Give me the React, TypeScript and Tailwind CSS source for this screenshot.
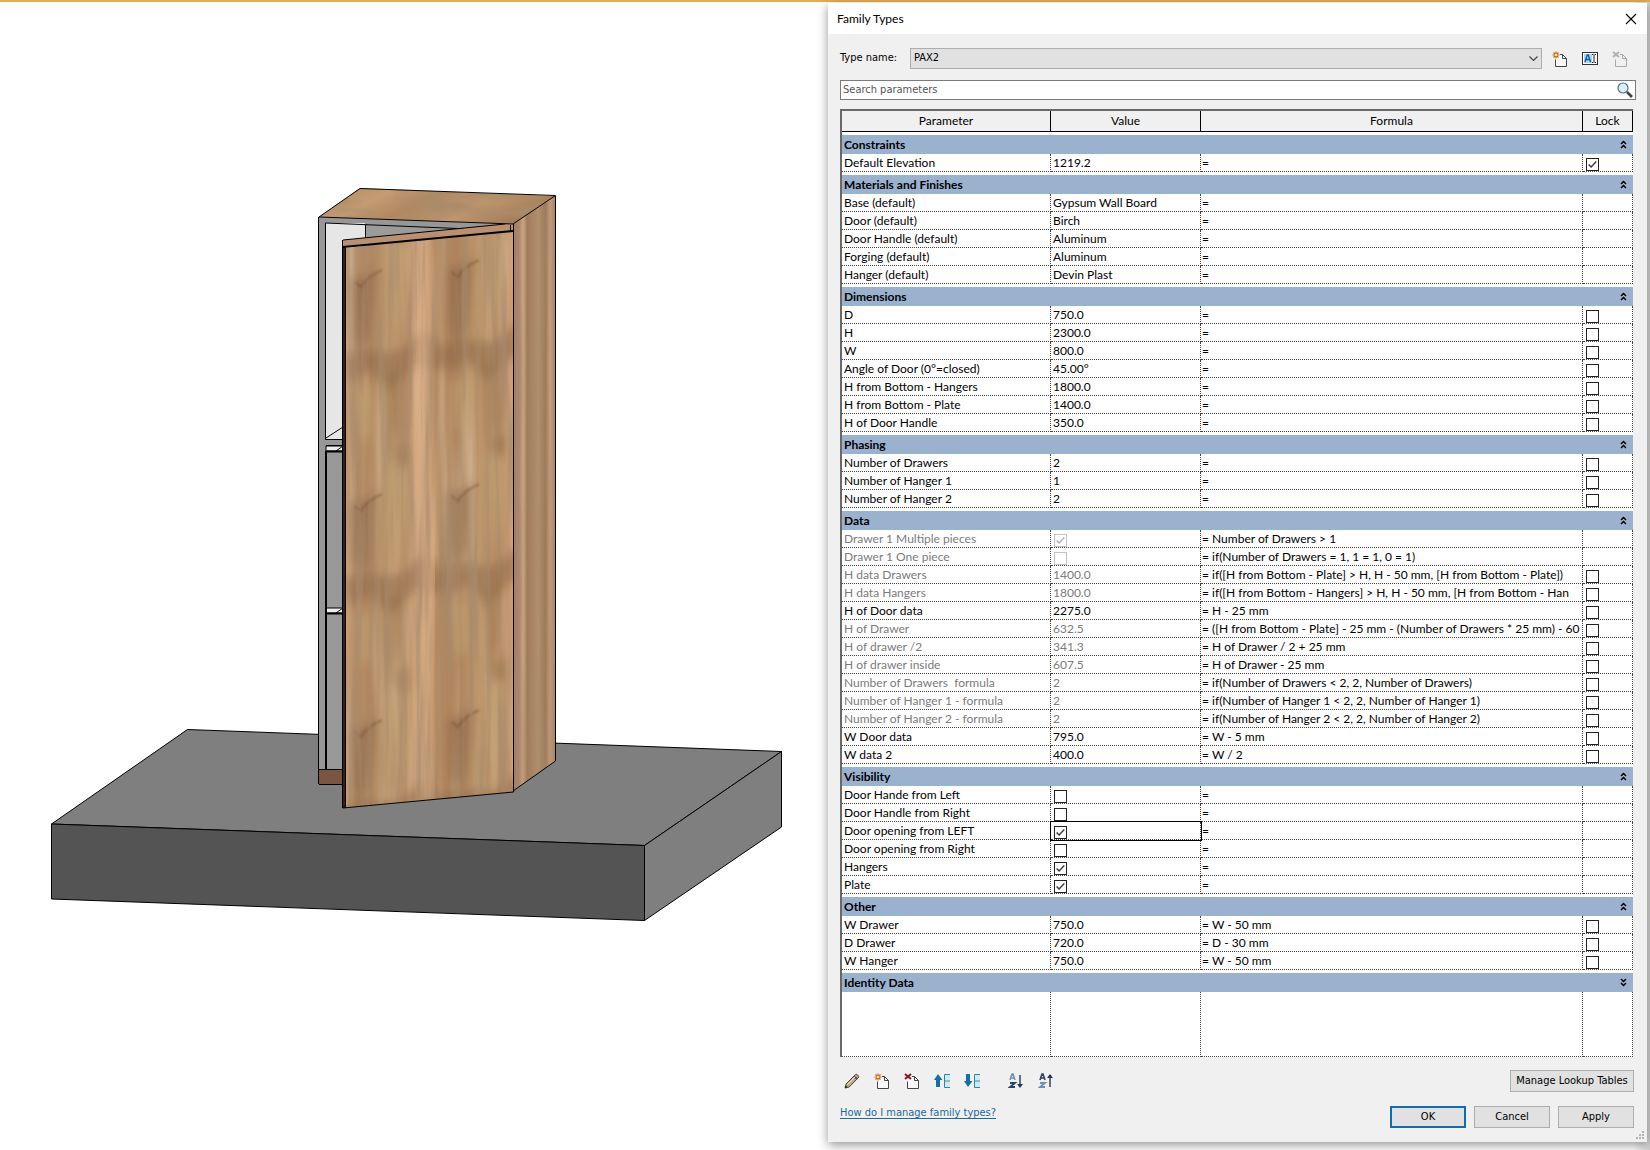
import { useState } from 'react';
import type { ReactNode } from 'react';

type Row = {
  name: string;
  value?: string;
  check?: boolean; // yes/no parameter
  formula?: string;
  lock?: boolean; // undefined = cannot be locked
  dim?: boolean; // driven by a formula
};

type Group = { title: string; open: boolean; rows: Row[] };

const GROUPS: Group[] = [
  {
    title: 'Constraints',
    open: true,
    rows: [{ name: 'Default Elevation', value: '1219.2', lock: true }],
  },
  {
    title: 'Materials and Finishes',
    open: true,
    rows: [
      { name: 'Base (default)', value: 'Gypsum Wall Board' },
      { name: 'Door (default)', value: 'Birch' },
      { name: 'Door Handle (default)', value: 'Aluminum' },
      { name: 'Forging (default)', value: 'Aluminum' },
      { name: 'Hanger (default)', value: 'Devin Plast' },
    ],
  },
  {
    title: 'Dimensions',
    open: true,
    rows: [
      { name: 'D', value: '750.0', lock: false },
      { name: 'H', value: '2300.0', lock: false },
      { name: 'W', value: '800.0', lock: false },
      { name: 'Angle of Door (0°=closed)', value: '45.00°', lock: false },
      { name: 'H from Bottom - Hangers', value: '1800.0', lock: false },
      { name: 'H from Bottom - Plate', value: '1400.0', lock: false },
      { name: 'H of Door Handle', value: '350.0', lock: false },
    ],
  },
  {
    title: 'Phasing',
    open: true,
    rows: [
      { name: 'Number of Drawers', value: '2', lock: false },
      { name: 'Number of Hanger 1', value: '1', lock: false },
      { name: 'Number of Hanger 2', value: '2', lock: false },
    ],
  },
  {
    title: 'Data',
    open: true,
    rows: [
      { name: 'Drawer 1 Multiple pieces', check: true, formula: 'Number of Drawers > 1', dim: true },
      { name: 'Drawer 1 One piece', check: false, formula: 'if(Number of Drawers = 1, 1 = 1, 0 = 1)', dim: true },
      { name: 'H data Drawers', value: '1400.0', formula: 'if([H from Bottom - Plate] > H, H - 50 mm, [H from Bottom - Plate])', lock: false, dim: true },
      { name: 'H data Hangers', value: '1800.0', formula: 'if([H from Bottom - Hangers] > H, H - 50 mm, [H from Bottom - Han', lock: false, dim: true },
      { name: 'H of Door data', value: '2275.0', formula: 'H - 25 mm', lock: false },
      { name: 'H of Drawer', value: '632.5', formula: '([H from Bottom - Plate] - 25 mm - (Number of Drawers * 25 mm) - 60', lock: false, dim: true },
      { name: 'H of drawer /2', value: '341.3', formula: 'H of Drawer / 2 + 25 mm', lock: false, dim: true },
      { name: 'H of drawer inside', value: '607.5', formula: 'H of Drawer - 25 mm', lock: false, dim: true },
      { name: 'Number of Drawers  formula', value: '2', formula: 'if(Number of Drawers < 2, 2, Number of Drawers)', lock: false, dim: true },
      { name: 'Number of Hanger 1 - formula', value: '2', formula: 'if(Number of Hanger 1 < 2, 2, Number of Hanger 1)', lock: false, dim: true },
      { name: 'Number of Hanger 2 - formula', value: '2', formula: 'if(Number of Hanger 2 < 2, 2, Number of Hanger 2)', lock: false, dim: true },
      { name: 'W Door data', value: '795.0', formula: 'W - 5 mm', lock: false },
      { name: 'W data 2', value: '400.0', formula: 'W / 2', lock: false },
    ],
  },
  {
    title: 'Visibility',
    open: true,
    rows: [
      { name: 'Door Hande from Left', check: false },
      { name: 'Door Handle from Right', check: false },
      { name: 'Door opening from LEFT', check: true },
      { name: 'Door opening from Right', check: false },
      { name: 'Hangers', check: true },
      { name: 'Plate', check: true },
    ],
  },
  {
    title: 'Other',
    open: true,
    rows: [
      { name: 'W Drawer', value: '750.0', formula: 'W - 50 mm', lock: false },
      { name: 'D Drawer', value: '720.0', formula: 'D - 30 mm', lock: false },
      { name: 'W Hanger', value: '750.0', formula: 'W - 50 mm', lock: false },
    ],
  },
  { title: 'Identity Data', open: false, rows: [] },
];

const Tick = ({ label, checked, disabled }: { label: string; checked: boolean; disabled?: boolean }) => {
  const [on, setOn] = useState(checked);
  return (
    <span className="grid size-[13px]">
      <input
        type="checkbox"
        aria-label={label}
        checked={on}
        disabled={disabled}
        onChange={() => setOn(!on)}
        className="col-start-1 row-start-1 size-[13px] appearance-none border border-[#222] bg-white disabled:border-[#c4c4c4]"
      />
      {on && (
        <svg viewBox="0 0 13 13" className={`pointer-events-none col-start-1 row-start-1 size-[13px] ${disabled ? 'text-[#b0b0b0]' : 'text-[#3a3a3a]'}`}>
          <path d="M2.6 6.4 5.1 9 10.3 3.6" fill="none" stroke="currentColor" strokeWidth="1.4" />
        </svg>
      )}
    </span>
  );
};

/* ---------- icons ---------- */

const Svg = ({ children }: { children: ReactNode }) => (
  <svg viewBox="0 0 16 16" className="size-4" fill="none">
    {children}
  </svg>
);

const Sheet = ({ color = '#444', fill = '#fafafa' }) => (
  <>
    <path d="M3.5 8v7.5h11v-8l-3-4h-3" fill={fill} />
    <path d="M3.500 8.500v7h11v-8h-4v-4l4 4M8 3.500h2.500" stroke={color} />
  </>
);

const NewIcon = () => (
  <Svg>
    <Sheet />
    <path d="M4 .5v7M.5 4h7M1.5 1.5l5 5M6.5 1.5l-5 5" stroke="#c06a10" strokeWidth="1.2" />
    <circle cx="4" cy="4" r="1.3" fill="#ffe08a" />
  </Svg>
);

const DeleteIcon = ({ off = false }) => (
  <Svg>
    <Sheet color={off ? '#a9a9a9' : '#444'} fill={off ? '#f0f0f0' : '#fafafa'} />
    <path d="m1 1 6 5M7 1 1 6" stroke={off ? '#b0b0b0' : '#8b1a1a'} strokeWidth="2" />
  </Svg>
);

const RenameIcon = () => (
  <Svg>
    <rect x=".5" y="1.5" width="15" height="12" fill="#fff" stroke="#333" />
    <rect x="2" y="3" width="8" height="9" fill="#a8d4f5" />
    <path d="m3 11 2.3-7h1l2.3 7M4 8.5h3.5" stroke="#0f5f9c" strokeWidth="1.4" />
    <path d="M10 3.5h1.5m1 0H14M12 4v7M10 11.5h1.5m1 0H14" stroke="#222" />
  </Svg>
);

const PencilIcon = () => (
  <Svg>
    <path d="m1 15 1.2-4.2 9.3-9.3c1-1 4 1.5 3 3L5.2 14 1 15Z" fill="#c3ab86" stroke="#444" />
    <path d="m10 3 3.3 3.2" stroke="#555" strokeWidth="2" />
    <path d="m3.5 11.5 8-8" stroke="#efe2c8" />
    <path d="m1 15 .8-2.6L3.5 14 1 15Z" fill="#222" />
  </Svg>
);

const MoveIcon = ({ down = false }) => (
  <Svg>
    <path d={down ? 'M2 1h4v7h2.5L4 14 0 8h2Z' : 'M2 14h4V7h2.5L4 1 0 7h2Z'} fill="#1570a6" />
    <path d="M11 2h5v5h-5zM11 9h5v5h-5z" fill="#cdeaf5" />
    <path d="M16 1.5h-5.5v13H16M10.5 8H16" stroke="#2a86a8" />
  </Svg>
);

const SortIcon = ({ up = false }) => (
  <Svg>
    <path d="m2 7 2-6h1l2 6M3 5h3" stroke={up ? '#2e4262' : '#6f90b4'} strokeWidth="1.6" />
    <path d="M2 10h5l-5 4h5" stroke={up ? '#6f90b4' : '#2e4262'} strokeWidth="1.8" />
    <path d="M12 2v12" stroke="#24395a" strokeWidth="1.4" />
    <path d={up ? 'm12 1-3 4h6Z' : 'm12 15-3-4h6Z'} fill="#24395a" />
  </Svg>
);

const LensIcon = () => (
  <Svg>
    <circle cx="6" cy="6" r="5" fill="#dceef8" stroke="#5b7280" strokeWidth="1.2" />
    <path d="m10 10 5 5" stroke="#444" strokeWidth="2.6" />
  </Svg>
);

const Chevrons = ({ down }: { down: boolean }) => (
  <svg viewBox="0 0 7 9" className="h-[9px] w-[7px]" fill="none" stroke="#000" strokeWidth="1.5">
    <path d={down ? 'M1 1l2.5 2.5L6 1M1 5l2.5 2.5L6 5' : 'M1 4l2.5-2.5L6 4M1 8l2.5-2.5L6 8'} />
  </svg>
);

/* ---------- 3D view ---------- */

// figure marks that repeat over the veneer
const Knots = ({ x, y }: { x: number; y: number }) => (
  <g transform={`translate(${x} ${y})`}>
    <g filter="url(#haze)">
      <path d="M0 4C10 6 20 0 26-8L24 20 20 60 10 80 2 60Z" fill="#84603f" opacity=".5" />
      <path d="M38-30 60-34 56 30 50 66 44 40Z" fill="#c3a273" opacity=".7" />
      <path d="M-6 84C14 62 40 92 60 68S90 72 96 84L88 98 66 92 40 118 20 96 0 110Z" fill="#84603f" opacity=".45" />
      <path d="M4 120 24 112 22 160 8 170Z" fill="#c0a071" opacity=".6" />
      <path d="M34 100 54 96 52 150 40 190Z" fill="#8d653f" opacity=".35" />
      <path d="M44 176 60 168 58 200 48 196Z" fill="#84603f" opacity=".35" />
    </g>
    <path d="M5 8 11 13C16 4 24 0 32-4" stroke="#6d4729" strokeWidth="2" fill="none" opacity=".45" filter="url(#soft)" />
  </g>
);

const ModelView = () => (
  <svg viewBox="0 2 825 1148" className="h-auto w-full" role="img" aria-label="3D view of the wardrobe">
    <defs>
      <filter id="grain" x="0" y="0" width="1" height="1">
        <feTurbulence type="fractalNoise" baseFrequency=".13 .006" numOctaves="3" seed="7" />
        <feColorMatrix values="0 0 0 0 .38  0 0 0 0 .25  0 0 0 0 .15  2 0 0 0 -.84" />
      </filter>
      <filter id="paleGrain" x="0" y="0" width="1" height="1">
        <feTurbulence type="fractalNoise" baseFrequency=".08 .005" numOctaves="2" seed="21" />
        <feColorMatrix values="0 0 0 0 .84  0 0 0 0 .68  0 0 0 0 .5  2.4 0 0 0 -1.05" />
      </filter>
      <filter id="topGrain" x="0" y="0" width="1" height="1">
        <feTurbulence type="fractalNoise" baseFrequency=".02 .06" numOctaves="3" seed="3" />
        <feColorMatrix values="0 0 0 0 .4  0 0 0 0 .26  0 0 0 0 .14  2.4 0 0 0 -.92" />
      </filter>
      <filter id="soft" x="-.5" y="-.5" width="2" height="2"><feGaussianBlur stdDeviation="1" /></filter>
      <filter id="haze" x="-.5" y="-.5" width="2" height="2"><feGaussianBlur stdDeviation="5" /></filter>
      <linearGradient id="door" x1="0" x2="1">
        <stop offset="0" stopColor="#c99d76" />
        <stop offset=".05" stopColor="#b48c66" />
        <stop offset=".15" stopColor="#b0865f" />
        <stop offset=".25" stopColor="#bc976c" />
        <stop offset=".36" stopColor="#b98e66" />
        <stop offset=".42" stopColor="#d0a47d" />
        <stop offset=".48" stopColor="#cca078" />
        <stop offset=".54" stopColor="#b58a60" />
        <stop offset=".66" stopColor="#ae835c" />
        <stop offset=".8" stopColor="#bd976c" />
        <stop offset=".92" stopColor="#b58a62" />
        <stop offset="1" stopColor="#cc9f78" />
      </linearGradient>
      <linearGradient id="side" x1="0" x2="1">
        <stop offset="0" stopColor="#a07d66" />
        <stop offset=".14" stopColor="#ab866a" />
        <stop offset=".24" stopColor="#cba483" />
        <stop offset=".34" stopColor="#a07b5b" />
        <stop offset=".6" stopColor="#b1906e" />
        <stop offset=".78" stopColor="#9c7957" />
        <stop offset=".88" stopColor="#c79e7e" />
        <stop offset="1" stopColor="#a98467" />
      </linearGradient>
      <linearGradient id="top" x1="0" x2="1" y2=".3">
        <stop offset="0" stopColor="#b08a60" />
        <stop offset=".3" stopColor="#c49c74" />
        <stop offset=".5" stopColor="#b1875f" />
        <stop offset=".75" stopColor="#bf966f" />
        <stop offset="1" stopColor="#a67e57" />
      </linearGradient>
      <clipPath id="doorClip"><path d="M346 248 513 231V792L346 808Z" /></clipPath>
      <clipPath id="sideClip"><path d="M513 224 555 196V761L513 791Z" /></clipPath>
      <clipPath id="topClip"><path d="M319 217 360 188 555 196 513 224Z" /></clipPath>
    </defs>

    {/* slab */}
    <g stroke="#000" strokeLinejoin="round">
      <path d="M187.5 729.5 781.5 751.5 644.5 845.5 51.5 824Z" fill="#7f7f7f" />
      <path d="M51.5 824 644.5 845.5V920.5L51.5 899Z" fill="#545454" />
      <path d="M644.5 845.5 781.5 751.5V827L644.5 920.5Z" fill="#7f7f7f" />
    </g>

    {/* carcass and drawers */}
    <path d="M318.5 217 513 224V784H318.5Z" fill="#979797" />
    <path d="M326 223H365V250H343V439H326Z" fill="#e6e6e6" />
    <path d="M365 224 470 229 365 240Z" fill="#9b9b9b" />
    <path d="M326 452h17V769h-17Z" fill="#999" />
    <path d="M319 769h24v15h-24Z" fill="#7a5540" />
    <path d="M326 446h17v5h-17ZM326 608h17v5h-17Z" fill="#ededed" stroke="#000" />
    <path d="M326 438 343 427M326 439.5h17M326 445.5h17M336 451l7-5M336 613l7-5" stroke="#000" fill="none" />
    <path d="M326 451.5h17M326 613.5h17M326 451V770" stroke="#000" strokeWidth="2" />
    <path d="M319 769.5h24M319 784.5h24M318.5 217V784M325.5 223V440M325.5 223 470 229M365.5 225V240" stroke="#000" fill="none" />

    {/* top and side */}
    <path d="M319 217 360 188 555 196 513 224Z" fill="url(#top)" />
    <g clipPath="url(#topClip)">
      <path d="M319 188h236v36H319Z" filter="url(#topGrain)" />
    </g>
    <path d="M513 224 555 196V761L513 791Z" fill="url(#side)" />
    <g clipPath="url(#sideClip)">
      <path d="M513 196h42V792h-42Z" filter="url(#grain)" opacity=".6" />
    </g>

    {/* door */}
    <path d="M346 248 513 231V792L346 808Z" fill="url(#door)" />
    <g clipPath="url(#doorClip)">
      <path d="M346 230H513V808H346Z" filter="url(#paleGrain)" opacity=".4" />
      <Knots x={350} y={48} />
      <Knots x={447} y={40} />
      <Knots x={350} y={274} />
      <Knots x={447} y={264} />
      <Knots x={350} y={498} />
      <Knots x={447} y={488} />
      <Knots x={350} y={724} />
      <Knots x={447} y={714} />
      <path d="M418 235C430 330 416 420 426 500S414 660 428 800" stroke="#d9ad84" strokeWidth="14" fill="none" opacity=".8" filter="url(#haze)" />
      <path d="M346 230H513V808H346Z" filter="url(#grain)" />
    </g>
    <path d="M343 240 505 224H513V231L343 247Z" fill="#bb9071" />
    <path d="M343 247h3V808h-3Z" fill="#33201a" />
    <g stroke="#000" fill="none" strokeLinejoin="round">
      <path d="M319 217 360 188.5 555.5 195.5 513 224ZM555.5 196V761L513 791M513.5 224V792L343 808M342.5 240V808M345.5 248V808M343 240 505 224M510.5 225V231" />
      <path d="M343 247 513 231" strokeWidth="2" />
    </g>
  </svg>
);

/* ---------- dialog ---------- */

const cell = 'h-[18px] overflow-hidden border-b border-r border-dotted border-[#444] p-0 whitespace-pre';

const GroupRows = ({ group }: { group: Group }) => {
  const [open, setOpen] = useState(group.open);
  return (
    <tbody>
      <tr><td colSpan={4} className="h-[3px] p-0" /></tr>
      <tr className="bg-[#9ab2ce]">
        <th colSpan={4} scope="colgroup" className="h-[19px] p-0 pr-[6px] pl-[2px]">
          <div className="flex items-center justify-between leading-[18px]">
            {group.title}
            <button aria-label={`Toggle ${group.title}`} aria-expanded={open} onClick={() => setOpen(!open)}>
              <Chevrons down={!open} />
            </button>
          </div>
        </th>
      </tr>
      {open && group.rows.map((r) => (
        <tr key={r.name} className={r.dim ? 'text-[#7b7b7b]' : 'text-black'}>
          <td className={`${cell} pl-[2px]`}>{r.name}</td>
          <td className={`${cell} pl-[2px] ${r.name === 'Door opening from LEFT' ? 'outline outline-black' : ''}`}>
            {r.check === undefined ? r.value : (
              <div className="pt-[3px] pl-px">
                <Tick label={r.name} checked={r.check} disabled={r.dim} />
              </div>
            )}
          </td>
          <td className={`${cell} pl-px text-black`}>= {r.formula}</td>
          <td className={`${cell} pl-[2px]`}>
            {r.lock !== undefined && (
              <div className="pt-[3px] pl-px">
                <Tick label={`Lock ${r.name}`} checked={r.lock} />
              </div>
            )}
          </td>
        </tr>
      ))}
    </tbody>
  );
};

const pushButton = 'h-[22px] border border-[#adadad] bg-[#e1e1e1]';
const headCell = 'h-[21px] border-r border-b border-black p-0 font-normal';

export default function App() {
  return (
    <div className="min-h-screen border-t-2 border-[#e0b04c] bg-white text-[11px] text-black font-['DejaVu_Sans_Condensed','DejaVu_Sans',sans-serif]">
      <div className="flex items-start bg-linear-to-r from-white from-99% to-[#d0d0d0] to-100%">
        <main className="w-1/2">
          <ModelView />
        </main>

        <div className="w-1/2 px-[3px] pt-px pb-2">
          <section role="dialog" aria-label="Family Types" className="flex flex-col bg-[#f0f0f0] shadow-[0_3px_10px_#0000006b]">
            <header className="flex h-[31px] items-center justify-between bg-white pr-[10px] pl-[9px] font-[Lato,sans-serif]">
              <h1 className="text-xs">Family Types</h1>
              <button aria-label="Close">
                <svg viewBox="0 0 12 12" className="size-3" stroke="#000" strokeWidth="1.1">
                  <path d="m1 1 10 10M11 1 1 11" />
                </svg>
              </button>
            </header>

            <div className="flex flex-col pr-[11px] pl-3">
              <div className="mt-[14px] flex h-[21px] items-center">
                <label htmlFor="type" className="w-[70px]">Type name:</label>
                <div className="grid flex-1 items-center">
                  <select id="type" className="col-start-1 row-start-1 h-[21px] appearance-none border border-[#adadad] bg-[#e1e1e1] px-[3px]">
                    <option>PAX2</option>
                  </select>
                  <svg viewBox="0 0 9 6" className="pointer-events-none col-start-1 row-start-1 mr-1 h-[6px] w-[9px] justify-self-end" fill="none" stroke="#444" strokeWidth="1.2">
                    <path d="m.5.5 4 4 4-4" />
                  </svg>
                </div>
                <div className="flex gap-[14px] pr-2 pl-[10px]">
                  <button aria-label="New type"><NewIcon /></button>
                  <button aria-label="Rename type"><RenameIcon /></button>
                  <button aria-label="Delete type" disabled><DeleteIcon off /></button>
                </div>
              </div>

              <div className="mt-[11px] flex h-5 items-center border border-[#7a7a7a] bg-white px-[2px]">
                <input aria-label="Search parameters" placeholder="Search parameters" className="flex-1 outline-none placeholder:text-[#555]" />
                <button aria-label="Search"><LensIcon /></button>
              </div>

              <div className="mt-[9px] mr-[3px] border-t-2 border-l-2 border-[#696969] bg-white">
                <table className="w-full table-fixed border-separate border-spacing-0 text-left text-xs leading-[16px] font-[Lato,sans-serif]">
                  <colgroup>
                    <col className="w-[209px]" />
                    <col className="w-[150px]" />
                    <col />
                    <col className="w-[50px]" />
                  </colgroup>
                  <thead>
                    <tr className="bg-[#f0f0f0] text-center">
                      <th className={headCell}>Parameter</th>
                      <th className={headCell}>Value</th>
                      <th className={headCell}>Formula</th>
                      <th className={headCell}>Lock</th>
                    </tr>
                  </thead>
                  {GROUPS.map((g) => <GroupRows key={g.title} group={g} />)}
                  <tbody>
                    <tr>
                      <td className="h-[65px] border-r border-b border-dotted border-[#444]" />
                      <td className="border-r border-b border-dotted border-[#444]" />
                      <td className="border-r border-b border-dotted border-[#444]" />
                      <td className="border-r border-b border-dotted border-[#444]" />
                    </tr>
                  </tbody>
                </table>
              </div>

              <div className="mt-[13px] mr-[2px] flex h-[22px] items-center gap-[14px] pl-1">
                <button aria-label="Edit parameter"><PencilIcon /></button>
                <button aria-label="New parameter"><NewIcon /></button>
                <button aria-label="Delete parameter"><DeleteIcon /></button>
                <button aria-label="Move up"><MoveIcon /></button>
                <button aria-label="Move down"><MoveIcon down /></button>
                <button aria-label="Sort ascending" className="ml-[14px]"><SortIcon /></button>
                <button aria-label="Sort descending"><SortIcon up /></button>
                <button className={`${pushButton} ml-auto w-[124px]`}>Manage Lookup Tables</button>
              </div>

              <div className="mt-[14px] mr-[2px] mb-[14px] flex h-[22px] gap-2">
                <a href="#help" className="mr-auto leading-[13px] text-[#1a6a9c] underline underline-offset-2">How do I manage family types?</a>
                <button className="h-[22px] w-[76px] border-2 border-[#0f6cb0] bg-[#e1e1e1]">OK</button>
                <button className={`${pushButton} w-[76px]`}>Cancel</button>
                <button className={`${pushButton} w-[76px]`}>Apply</button>
              </div>
            </div>

            <svg viewBox="0 0 9 9" className="-mt-[11px] mr-[2px] mb-[2px] size-[9px] self-end" fill="#b5b5b5">
              <path d="M6 0h2v2H6zM3 3h2v2H3zM6 3h2v2H6zM0 6h2v2H0zM3 6h2v2H3zM6 6h2v2H6z" />
            </svg>
          </section>
        </div>
      </div>
    </div>
  );
}
